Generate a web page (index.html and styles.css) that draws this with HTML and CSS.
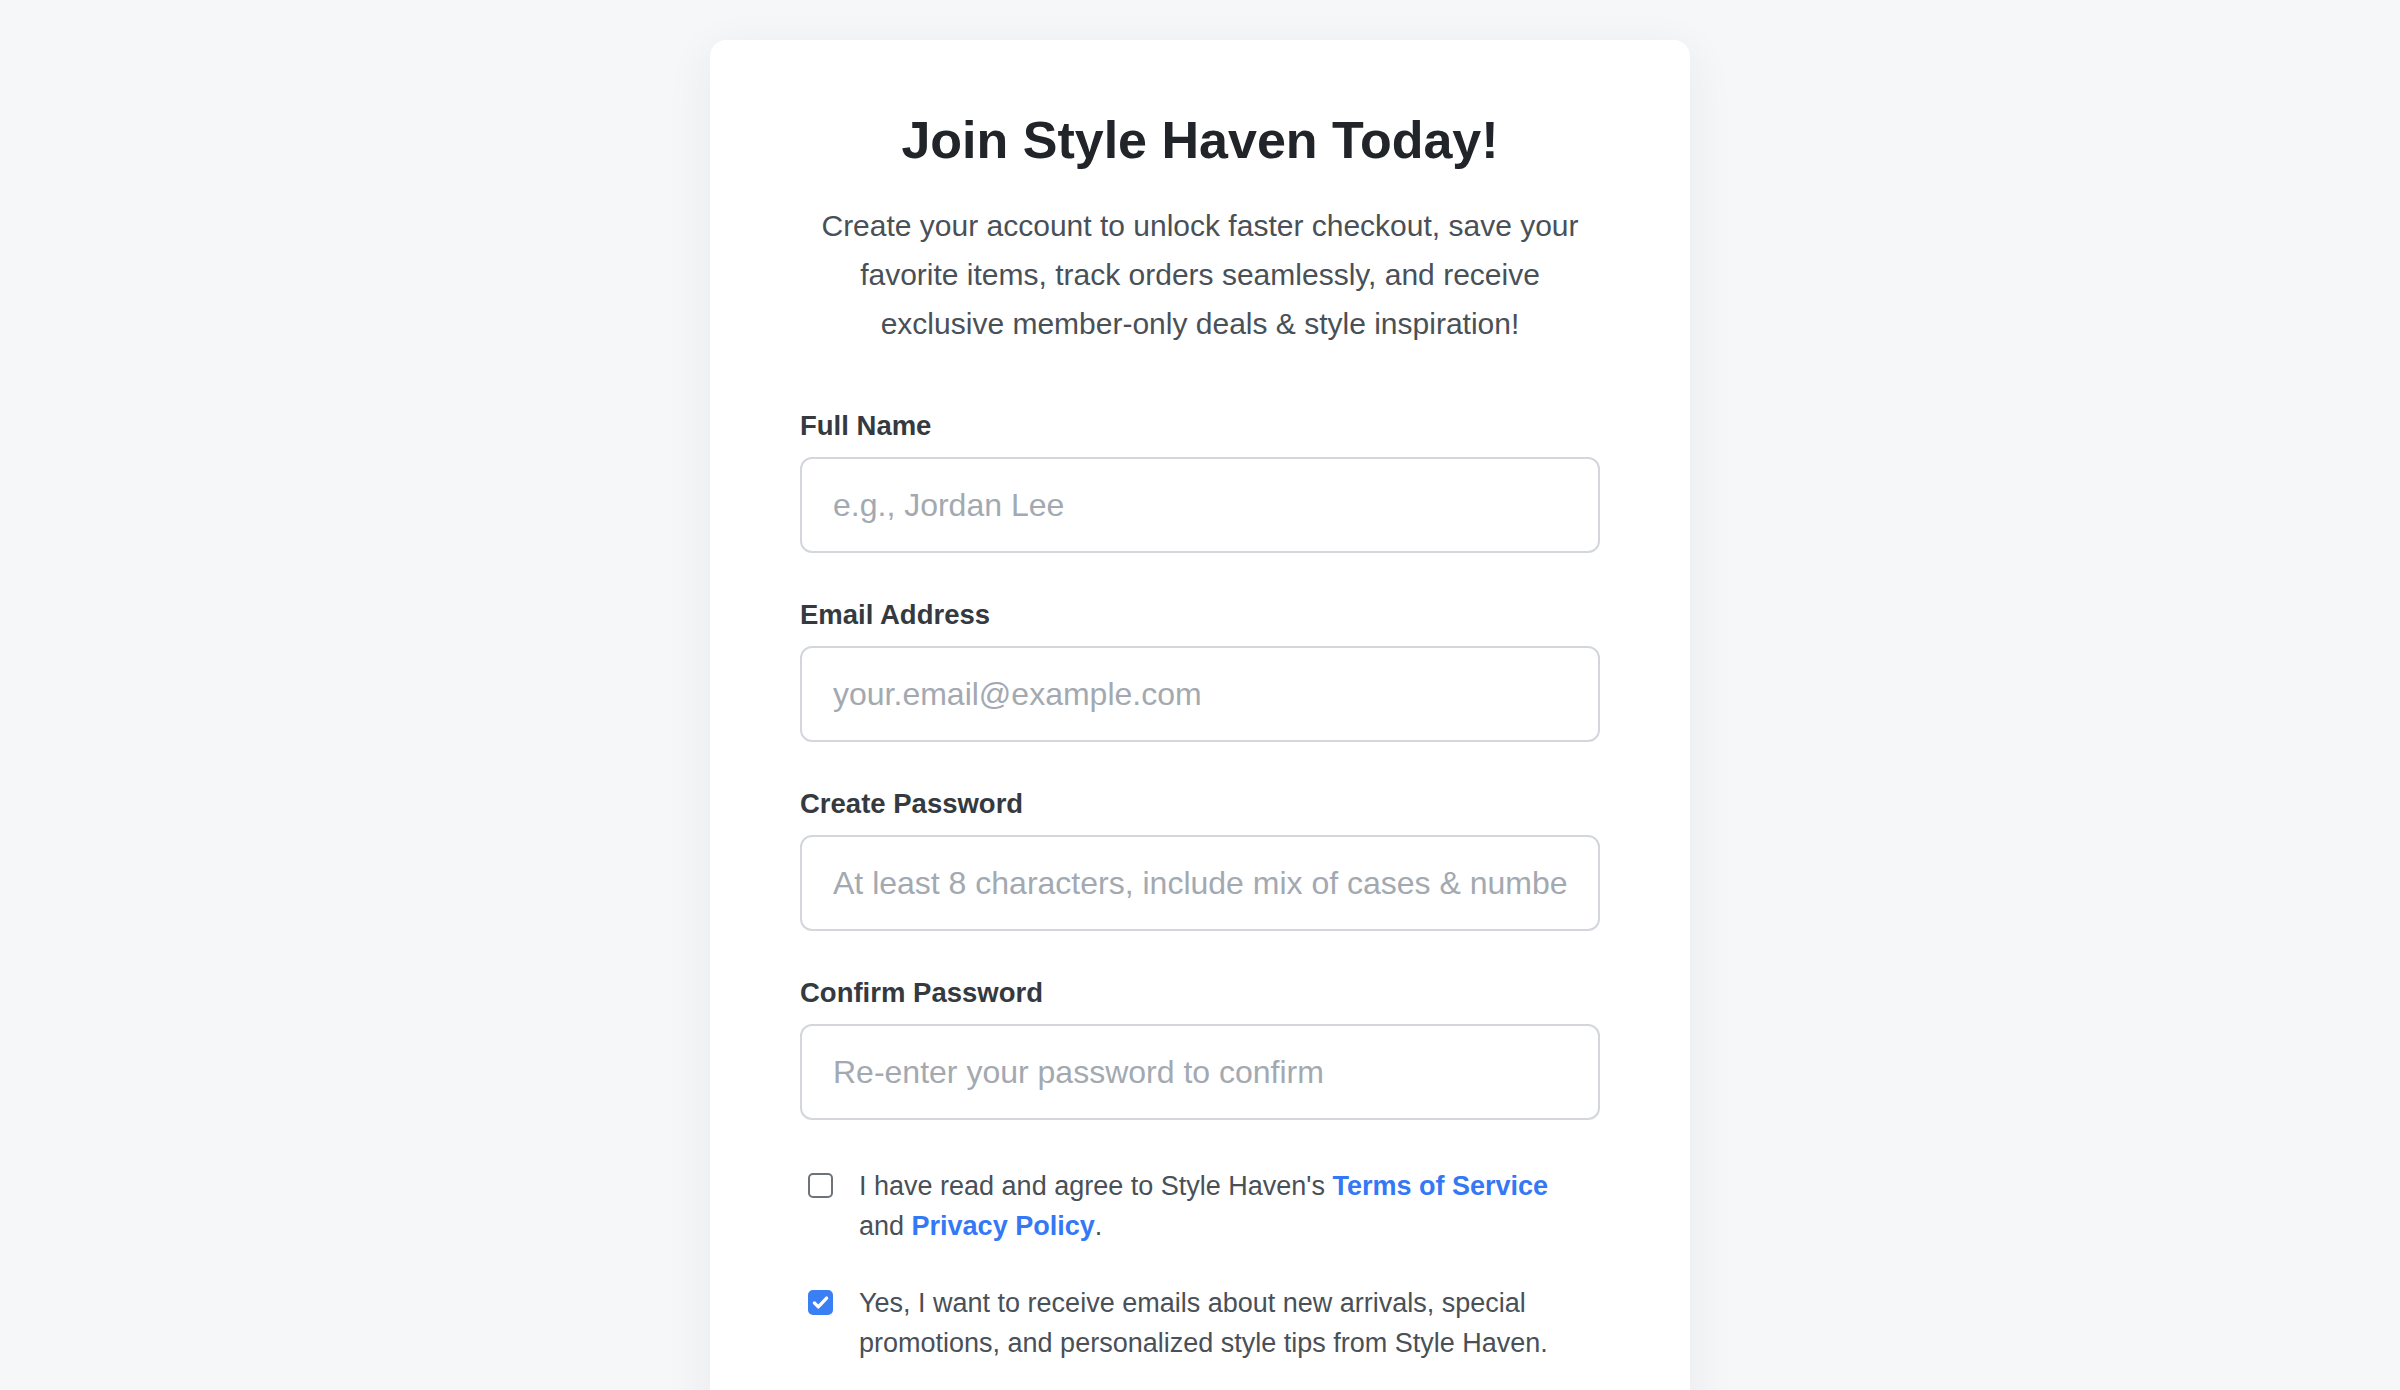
FILE: index.html
```html
<!DOCTYPE html>
<html lang="en">
<head>
<meta charset="utf-8">
<title>Join Style Haven</title>
<link rel="stylesheet" href="styles.css">
</head>
<body>
<main class="page">
  <section class="card">
    <h1 class="title">Join Style Haven Today!</h1>
    <p class="intro">Create your account to unlock faster checkout, save your favorite items, track orders seamlessly, and receive exclusive member-only deals &amp; style inspiration!</p>
    <form class="form">
      <div class="field">
        <label class="label" for="name">Full Name</label>
        <input class="input" id="name" type="text" placeholder="e.g., Jordan Lee">
      </div>
      <div class="field">
        <label class="label" for="email">Email Address</label>
        <input class="input" id="email" type="email" placeholder="your.email@example.com">
      </div>
      <div class="field">
        <label class="label" for="pw">Create Password</label>
        <input class="input" id="pw" type="password" placeholder="At least 8 characters, include mix of cases &amp; numbers">
      </div>
      <div class="field">
        <label class="label" for="pw2">Confirm Password</label>
        <input class="input" id="pw2" type="password" placeholder="Re-enter your password to confirm">
      </div>
      <label class="check">
        <span class="box"></span>
        <span class="check-text">I have read and agree to Style Haven's <a class="link" href="#">Terms of Service</a> and <a class="link" href="#">Privacy Policy</a>.</span>
      </label>
      <label class="check check-second">
        <span class="box box-on"><svg viewBox="0 0 24 24" width="21" height="21"><path d="M5 12.5l4.5 4.5L19 7" fill="none" stroke="#fff" stroke-width="3.8" stroke-linecap="round" stroke-linejoin="round"/></svg></span>
        <span class="check-text">Yes, I want to receive emails about new arrivals, special promotions, and personalized style tips from Style Haven.</span>
      </label>
    </form>
  </section>
</main>
</body>
</html>
```
FILE: styles.css
```css
* { box-sizing: border-box; }
html, body { margin: 0; padding: 0; }
body {
  background: #f6f7f9;
  font-family: "Liberation Sans", Arial, Helvetica, sans-serif;
  color: #212529;
}
.page {
  display: flex;
  justify-content: center;
  padding-top: 40px;
}
.card {
  width: 980px;
  background: #ffffff;
  border-radius: 16px;
  box-shadow: 0 12px 48px rgba(30, 40, 60, 0.07);
  padding: 69px 90px 80px;
}
.title {
  margin: 0 0 30px;
  font-size: 52px;
  line-height: 62px;
  font-weight: 700;
  text-align: center;
  color: #212529;
}
.intro {
  margin: 0 0 62px;
  font-size: 30px;
  line-height: 49px;
  text-align: center;
  color: #495057;
}
.form {
  display: flex;
  flex-direction: column;
}
.field {
  display: flex;
  flex-direction: column;
  margin-bottom: 46px;
}
.label {
  font-size: 27.5px;
  line-height: 31px;
  font-weight: 700;
  color: #343a40;
  margin-bottom: 16px;
}
.input {
  height: 96px;
  width: 100%;
  border: 2px solid #d3d7dc;
  border-radius: 12px;
  padding: 0 31px;
  font-family: "Liberation Sans", Arial, Helvetica, sans-serif;
  font-size: 32px;
  color: #212529;
  background: #fff;
  outline: none;
}
.input::placeholder { color: #a3a9b1; }
.check {
  display: flex;
  align-items: flex-start;
  gap: 26px;
  padding-left: 8px;
  margin-top: 0;
  font-size: 27px;
  line-height: 40px;
  color: #495057;
}
.check-second { margin-top: 37px; }
.box {
  flex: none;
  width: 25px;
  height: 25px;
  margin-top: 7px;
  border: 2px solid #6e737a;
  border-radius: 5px;
  background: #fff;
  display: flex;
  align-items: center;
  justify-content: center;
}
.box-on {
  background: #3b7ff5;
  border-color: #3b7ff5;
}
.check-text { flex: 1; }
.link {
  color: #3478f6;
  font-weight: 700;
  text-decoration: none;
}
```
